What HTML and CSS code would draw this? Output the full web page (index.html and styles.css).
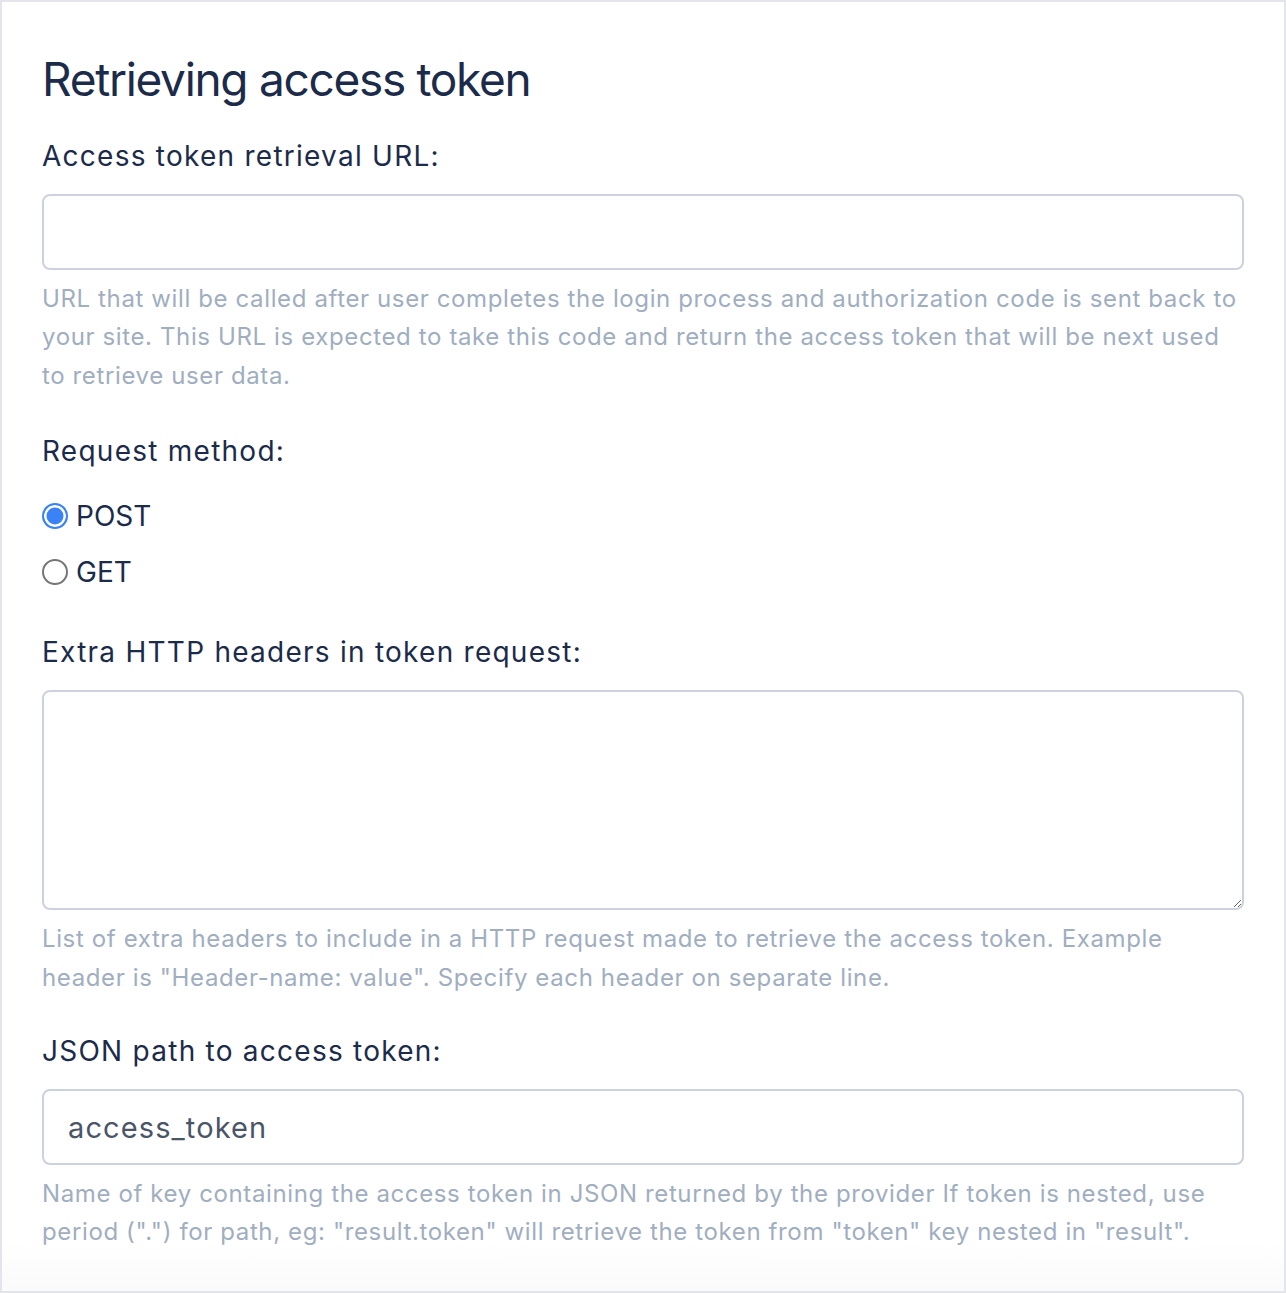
FILE: index.html
```html
<!DOCTYPE html>
<html lang="en">
<head>
<meta charset="utf-8">
<title>Retrieving access token</title>
<link rel="stylesheet" href="styles.css">
</head>
<body>
<div class="page">
  <h1 class="title">Retrieving access token</h1>

  <div class="group">
    <label class="label" for="url">Access token retrieval URL:</label>
    <input class="field" id="url" type="text">
    <p class="help">URL that will be called after user completes the login process and authorization code is sent back to your site. This URL is expected to take this code and return the access token that will be next used to retrieve user data.</p>
  </div>

  <div class="group group-radios">
    <div class="label">Request method:</div>
    <div class="radios">
      <label class="radio-row"><input class="radio" type="radio" name="method" checked><span>POST</span></label>
      <label class="radio-row"><input class="radio" type="radio" name="method"><span>GET</span></label>
    </div>
  </div>

  <div class="group group-tight">
    <label class="label" for="headers">Extra HTTP headers in token request:</label>
    <textarea class="field area" id="headers"></textarea>
    <p class="help">List of extra headers to include in a HTTP request made to retrieve the access token. Example header is "Header-name: value". Specify each header on separate line.</p>
  </div>

  <div class="group">
    <label class="label" for="path">JSON path to access token:</label>
    <input class="field" id="path" type="text" value="access_token">
    <p class="help">Name of key containing the access token in JSON returned by the provider If token is nested, use period (".") for path, eg: "result.token" will retrieve the token from "token" key nested in "result".</p>
  </div>
</div>
</body>
</html>
```

FILE: styles.css
```css
* { box-sizing: border-box; }
html, body { margin: 0; padding: 0; background: #fff; }
body {
  font-family: Inter, "Noto Sans", "Liberation Sans", sans-serif;
  color: #1c2b4a;
}
.page {
  width: 1286px;
  height: 1293px;
  border: 2px solid #e3e5ea;
  padding: 48px 40px 0 40px;
  background: linear-gradient(#fff 1240px, #fafafb);
}
.title {
  margin: 0 0 28px 0;
  font-size: 46px;
  line-height: 58px;
  font-weight: 400;
  letter-spacing: -1.3px;
}
.group { display: flex; flex-direction: column; margin-bottom: 36px; }
.group-radios { margin-bottom: 40px; }
.group-tight { margin-bottom: 34px; }
.label {
  display: block;
  font-size: 28px;
  line-height: 40px;
  letter-spacing: 1.25px;
  margin-bottom: 18px;
}
.field {
  display: block;
  width: 100%;
  height: 76px;
  border: 2px solid #cbd2dc;
  border-radius: 8px;
  padding: 0 24px;
  font-family: inherit;
  font-size: 29px;
  letter-spacing: 1.1px;
  color: #4a5568;
  background: #fff;
  outline: none;
}
.area { height: 220px; resize: vertical; padding: 16px 24px; }
.help {
  margin: 10px 0 0 0;
  font-size: 24px;
  line-height: 38.4px;
  letter-spacing: 0.62px;
  color: #a0aec0;
}
.radios { display: flex; flex-direction: column; gap: 16px; margin-top: 7px; }
.radio-row {
  display: flex;
  align-items: center;
  gap: 8px;
  height: 40px;
  font-size: 28px;
}
.radio {
  appearance: none;
  -webkit-appearance: none;
  margin: 0;
  width: 26px;
  height: 26px;
  border-radius: 50%;
  border: 2px solid #767676;
  background: #fff;
}
.radio:checked {
  border: 2.5px solid #3b82f6;
  background: #3b82f6;
  box-shadow: inset 0 0 0 2.5px #fff;
}
```
